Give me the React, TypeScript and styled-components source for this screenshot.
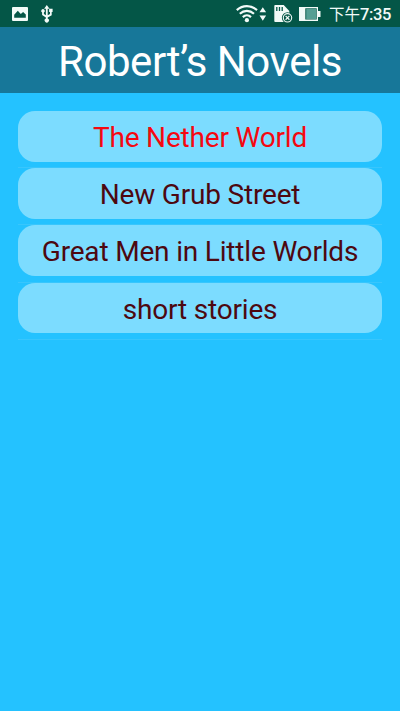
import React from "react";
import styled, { createGlobalStyle } from "styled-components";

const GlobalStyle = createGlobalStyle`
  * { box-sizing: border-box; }
  body { margin: 0; background: #24c2ff; }
`;

const Screen = styled.div`
  width: 400px;
  height: 711px;
  display: flex;
  flex-direction: column;
  overflow: hidden;
  background: #24c2ff;
  font-family: Roboto, "Noto Sans CJK TC", sans-serif;
`;

const StatusBar = styled.div`
  height: 27px;
  flex: none;
  display: flex;
  align-items: flex-start;
  justify-content: space-between;
  background: #045647;
`;

const StatusIcons = styled.svg`
  display: block;
  height: 27px;
  fill: #f2faf8;
`;

const StatusEnd = styled.div`
  display: flex;
  padding-right: 9px;
`;

const Clock = styled.time`
  display: flex;
  width: 62px;
  margin-left: 8px;
  white-space: nowrap;
  font-size: 16.5px;
  font-weight: 500;
  line-height: 29px;
  letter-spacing: -0.4px;
  color: #f2faf8;
`;

const Period = styled.span`
  width: 31px;
  font-family: "Noto Sans CJK TC", sans-serif;
  font-size: 15.5px;
  letter-spacing: 0;
  font-weight: 400;
  line-height: 27px;
`;

const TitleBar = styled.header`
  height: 66px;
  flex: none;
  display: flex;
  justify-content: center;
  background: #177799;
`;

const Title = styled.h1`
  margin: 0;
  font-size: 42px;
  font-weight: 400;
  line-height: 70px;
  letter-spacing: -0.45px;
  white-space: nowrap;
  color: #fff;
`;

const NovelList = styled.ul`
  margin: 0;
  padding: 18px 18px 0;
  list-style: none;
`;

const NovelRow = styled.li`
  height: 57.2px;
  border-bottom: 1px solid #38c6fd;
`;

const NovelButton = styled.button<{ $selected?: boolean }>`
  display: block;
  width: 100%;
  height: 50.7px;
  padding: 2px 0 0;
  border: 0;
  border-radius: 17px;
  background: #7cdcff;
  font-family: inherit;
  font-size: 28px;
  letter-spacing: -0.18px;
  line-height: 50px;
  white-space: nowrap;
  text-align: center;
  color: ${(p) => (p.$selected ? "#f50810" : "#4d0810")};
`;

const novels = ["The Nether World", "New Grub Street", "Great Men in Little Worlds", "short stories"];

export default function App() {
  return (
    <Screen>
      <GlobalStyle />
      <StatusBar>
        <StatusIcons width="60" viewBox="0 0 60 27">
          <path
            fillRule="evenodd"
            d="M13 7h14q1 0 1 1v12q0 1-1 1H13q-1 0-1-1V8q0-1 1-1Zm1.2 10.8h11.6v-3.2l-2.7-2.7-2.3 2.2-3-3.3-3.6 4Z"
          />
          <path d="m46.8 5 2.7 3.7h-1.8v6.6l2.3-1.2v-2h-.9V8.8h3.5v3.3h-.9v3.1l-4 2.2v1.1a2.1 2.1 0 1 1-1.8 0v-1.1l-3.8-2.4v-2.5a1.8 1.8 0 1 1 1.8 0V14l2 1.3V8.7h-1.8Z" />
        </StatusIcons>
        <StatusEnd>
          <StatusIcons width="86" viewBox="235 0 86 27">
            <g fill="none" stroke="#f2faf8" strokeWidth="2.2">
              <path d="M236.8 10.1c5.8-5.4 14.4-5.4 20.2 0M239.8 13.7c4.2-3.9 10-3.9 14.2 0M242.8 17.1c2.4-2.2 5.8-2.2 8.2 0" />
            </g>
            <circle cx="246.9" cy="20.2" r="2.1" />
            <path d="m262.8 7.2 3.3 5.1h-6.6ZM262.8 20.7l3.3-5.1h-6.6Z" />
            <path d="M275.2 5h8.5l5.6 6v9.5q0 1.5-1.5 1.5h-12.6q-.9 0-.9-1V6q0-1 .9-1Z" />
            <path d="M276.8 7v4M279.5 7v4M282.2 7v4" stroke="#045647" strokeWidth="1.3" />
            <circle cx="287.5" cy="17.8" r="5.6" fill="#045647" />
            <circle cx="287.5" cy="17.8" r="4.2" fill="none" stroke="#f2faf8" strokeWidth="1.1" />
            <path d="m285.6 15.9 3.8 3.8m0-3.8-3.8 3.8" stroke="#f2faf8" strokeWidth="1.3" />
            <path d="M299 7h19v4h2.5v6H318v4h-19Z" />
            <path d="M305.3 8.3h11.4v11.2h-11.4Z" fill="#045647" />
            <path d="M306.2 8.8h10v10.2h-10Z" fill="#559f94" />
          </StatusIcons>
          <Clock>
            <Period>下午</Period>
            <span>7:35</span>
          </Clock>
        </StatusEnd>
      </StatusBar>
      <TitleBar>
        <Title>Robert’s Novels</Title>
      </TitleBar>
      <NovelList>
        {novels.map((name, index) => (
          <NovelRow key={name}>
            <NovelButton $selected={index === 0}>{name}</NovelButton>
          </NovelRow>
        ))}
      </NovelList>
    </Screen>
  );
}
